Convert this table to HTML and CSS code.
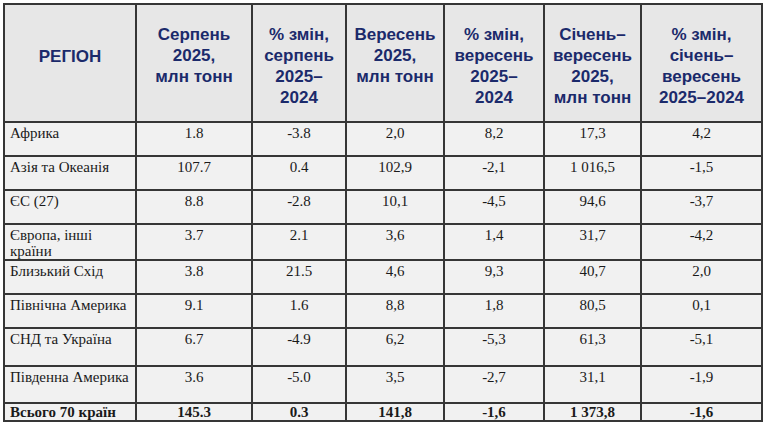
FILE: index.html
```html
<!DOCTYPE html>
<html lang="uk">
<head>
<meta charset="utf-8">
<link rel="stylesheet" href="styles.css">
<title>Виробництво сталі</title>
</head>
<body>
<table class="data">
  <colgroup>
    <col class="c1"><col class="c2"><col class="c3"><col class="c4"><col class="c5"><col class="c6"><col class="c7">
  </colgroup>
  <thead>
    <tr>
      <th class="region-head">РЕГІОН</th>
      <th>Серпень<br>2025,<br>млн тонн</th>
      <th>% змін,<br>серпень<br>2025–<br>2024</th>
      <th>Вересень<br>2025,<br>млн тонн</th>
      <th>% змін,<br>вересень<br>2025–<br>2024</th>
      <th>Січень–<br>вересень<br>2025,<br>млн тонн</th>
      <th>% змін,<br>січень–<br>вересень<br>2025–2024</th>
    </tr>
  </thead>
  <tbody>
    <tr><td class="name">Африка</td><td>1.8</td><td>-3.8</td><td>2,0</td><td>8,2</td><td>17,3</td><td>4,2</td></tr>
    <tr><td class="name">Азія та Океанія</td><td>107.7</td><td>0.4</td><td>102,9</td><td>-2,1</td><td>1 016,5</td><td>-1,5</td></tr>
    <tr><td class="name">ЄС (27)</td><td>8.8</td><td>-2.8</td><td>10,1</td><td>-4,5</td><td>94,6</td><td>-3,7</td></tr>
    <tr><td class="name">Європа, інші країни</td><td>3.7</td><td>2.1</td><td>3,6</td><td>1,4</td><td>31,7</td><td>-4,2</td></tr>
    <tr><td class="name">Близький Схід</td><td>3.8</td><td>21.5</td><td>4,6</td><td>9,3</td><td>40,7</td><td>2,0</td></tr>
    <tr><td class="name">Північна Америка</td><td>9.1</td><td>1.6</td><td>8,8</td><td>1,8</td><td>80,5</td><td>0,1</td></tr>
    <tr class="tall"><td class="name">СНД та Україна</td><td>6.7</td><td>-4.9</td><td>6,2</td><td>-5,3</td><td>61,3</td><td>-5,1</td></tr>
    <tr class="mid"><td class="name">Південна Америка</td><td>3.6</td><td>-5.0</td><td>3,5</td><td>-2,7</td><td>31,1</td><td>-1,9</td></tr>
    <tr class="total"><td class="name">Всього 70 країн</td><td>145.3</td><td>0.3</td><td>141,8</td><td>-1,6</td><td>1 373,8</td><td>-1,6</td></tr>
  </tbody>
</table>
</body>
</html>
```

FILE: styles.css
```css
html, body {
  margin: 0;
  padding: 0;
  background: #ffffff;
}
body {
  padding: 3px 0 0 3px;
}
.data {
  border-collapse: collapse;
  table-layout: fixed;
  width: 758px;
  font-family: "Liberation Serif", "Times New Roman", serif;
  font-size: 15px;
  color: #1a1a1a;
}
.c1 { width: 132px; }
.c2 { width: 116px; }
.c3 { width: 94px; }
.c4 { width: 98px; }
.c5 { width: 100px; }
.c6 { width: 97px; }
.c7 { width: 121px; }

.data th,
.data td {
  border: 2px solid #363636;
}
.data th {
  background: #e7e7e7;
  color: #1b2a6b;
  font-family: "Liberation Sans", Arial, sans-serif;
  font-weight: bold;
  font-size: 17px;
  line-height: 21px;
  text-align: center;
  vertical-align: top;
  white-space: nowrap;
  padding: 19px 2px 0;
  height: 97px;
}
.data th.region-head {
  padding-top: 41px;
  height: 75px;
}
.data td {
  font-family: "Liberation Serif", "Times New Roman", serif;
  background: #f1f1f1;
  text-align: center;
  vertical-align: top;
  line-height: 16px;
  padding: 2px 7px 0;
  height: 30px;
}
.data td.name {
  text-align: left;
  padding-left: 5px;
  padding-right: 2px;
}
.data tr.tall td {
  height: 34px;
}
.data tr.mid td {
  height: 33px;
}
.data tr.total td {
  font-weight: bold;
  height: 16px;
  padding-top: 0;
  line-height: 16px;
}
```
